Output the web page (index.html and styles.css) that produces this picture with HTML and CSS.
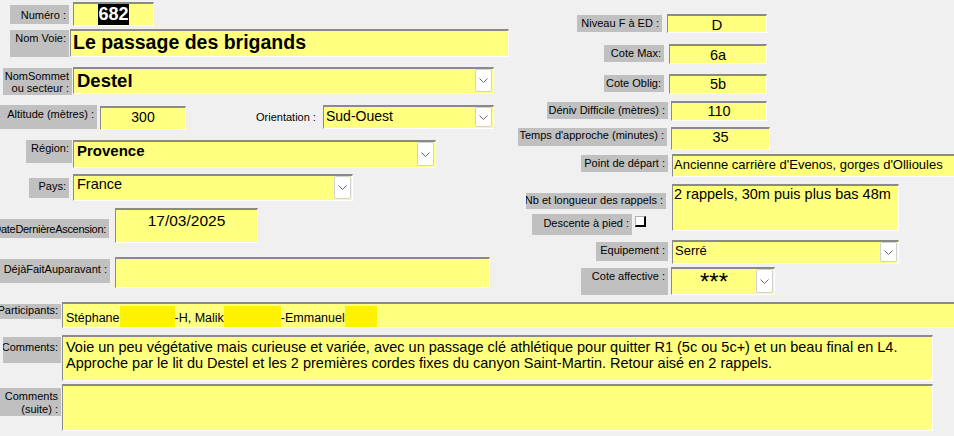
FILE: index.html
```html
<!DOCTYPE html>
<html lang="fr">
  <head>
    <meta charset="UTF-8" />
    <title>Fiche voie</title>
    <link rel="stylesheet" href="styles.css">
  </head>
  <body>
    <div class="form">
      <div class="top">
        <div class="col-left">
          <div class="row r-num">
            <div class="lbl"><span>Numéro :</span></div>
            <div class="fld"><span class="sel">682</span></div>
          </div>
          <div class="row r-voie">
            <div class="lbl"><span>Nom Voie:</span></div>
            <div class="fld">Le passage des brigands</div>
          </div>
          <div class="row r-sommet">
            <div class="lbl"><span>NomSommet<br />ou secteur :</span></div>
            <div class="fld combo">
              <div class="val">Destel</div>
              <div class="btn"><svg width="9" height="5" viewBox="0 0 9 5"><polyline points="0.5,0.5 4.5,4.5 8.5,0.5" /></svg></div>
            </div>
          </div>
          <div class="row r-alt">
            <div class="lbl"><span>Altitude (mètres) :</span></div>
            <div class="fld alt">300</div>
            <div class="plain">Orientation :</div>
            <div class="fld combo orient">
              <div class="val">Sud-Ouest</div>
              <div class="btn"><svg width="9" height="5" viewBox="0 0 9 5"><polyline points="0.5,0.5 4.5,4.5 8.5,0.5" /></svg></div>
            </div>
          </div>
          <div class="row r-reg">
            <div class="lbl"><span>Région:</span></div>
            <div class="fld combo">
              <div class="val">Provence</div>
              <div class="btn"><svg width="9" height="5" viewBox="0 0 9 5"><polyline points="0.5,0.5 4.5,4.5 8.5,0.5" /></svg></div>
            </div>
          </div>
          <div class="row r-pays">
            <div class="lbl"><span>Pays:</span></div>
            <div class="fld combo">
              <div class="val">France</div>
              <div class="btn"><svg width="9" height="5" viewBox="0 0 9 5"><polyline points="0.5,0.5 4.5,4.5 8.5,0.5" /></svg></div>
            </div>
          </div>
          <div class="row r-date">
            <div class="lbl"><span>DateDernièreAscension:</span></div>
            <div class="fld">17/03/2025</div>
          </div>
          <div class="row r-deja">
            <div class="lbl"><span>DéjàFaitAuparavant :</span></div>
            <div class="fld"></div>
          </div>
        </div>

        <div class="col-right">
          <div class="row r-niv">
            <div class="lbl"><span>Niveau F à ED :</span></div>
            <div class="fld num">D</div>
          </div>
          <div class="row r-max">
            <div class="lbl"><span>Cote Max:</span></div>
            <div class="fld num">6a</div>
          </div>
          <div class="row r-oblig">
            <div class="lbl"><span>Cote Oblig:</span></div>
            <div class="fld num">5b</div>
          </div>
          <div class="row r-deniv">
            <div class="lbl"><span>Déniv Difficile (mètres) :</span></div>
            <div class="fld num">110</div>
          </div>
          <div class="row r-temps">
            <div class="lbl"><span>Temps d'approche (minutes) :</span></div>
            <div class="fld num">35</div>
          </div>
          <div class="row r-point">
            <div class="lbl"><span>Point de départ :</span></div>
            <div class="fld">Ancienne carrière d'Evenos, gorges d'Ollioules</div>
          </div>
          <div class="row r-rap">
            <div class="sub">
              <div class="lbl nb"><span>Nb et longueur des rappels :</span></div>
              <div class="desc">
                <div class="lbl"><span>Descente à pied :</span></div>
                <div class="chk"></div>
              </div>
            </div>
            <div class="fld">2 rappels, 30m puis plus bas 48m</div>
          </div>
          <div class="row r-equip">
            <div class="lbl"><span>Equipement :</span></div>
            <div class="fld combo">
              <div class="val">Serré</div>
              <div class="btn"><svg width="9" height="5" viewBox="0 0 9 5"><polyline points="0.5,0.5 4.5,4.5 8.5,0.5" /></svg></div>
            </div>
          </div>
          <div class="row r-aff">
            <div class="lbl"><span>Cote affective :</span></div>
            <div class="fld combo">
              <div class="val">***</div>
              <div class="btn"><svg width="9" height="5" viewBox="0 0 9 5"><polyline points="0.5,0.5 4.5,4.5 8.5,0.5" /></svg></div>
            </div>
          </div>
        </div>
      </div>

      <div class="row r-part">
        <div class="lbl"><span>Participants:</span></div>
        <div class="fld">Stéphane<span class="mask m1"></span>-H, Malik<span class="mask m2"></span>-Emmanuel<span class="mask m3"></span></div>
      </div>
      <div class="row r-com">
        <div class="lbl"><span>Comments:</span></div>
        <div class="fld">Voie un peu végétative mais curieuse et variée, avec un passage clé athlétique pour quitter R1 (5c ou 5c+) et un beau final en L4.<br />Approche par le lit du Destel et les 2 premières cordes fixes du canyon Saint-Martin. Retour aisé en 2 rappels.</div>
      </div>
      <div class="row r-suite">
        <div class="lbl"><span>Comments<br />(suite) :</span></div>
        <div class="fld"></div>
      </div>
    </div>
  </body>
</html>
```

FILE: styles.css
```css
* {
  box-sizing: border-box;
}
body {
  margin: 0;
  background-color: #f0f0f0;
  font-family: "Liberation Sans", Arial, sans-serif;
  color: #000;
  width: 954px;
  height: 436px;
  overflow: hidden;
}
.form {
  width: 954px;
}
.top {
  display: flex;
  height: 295px;
}
.col-left {
  width: 510px;
  flex: none;
}
.col-right {
  flex: 1;
}
.row {
  display: flex;
  align-items: flex-start;
}

/* labels */
.lbl {
  flex: none;
  display: flex;
  justify-content: flex-end;
  overflow: hidden;
  white-space: nowrap;
  background-color: #c0c0c0;
  font-size: 11px;
  line-height: 13px;
  padding: 2px 3px 0 0;
}
.lbl span {
  text-align: right;
}
.plain {
  flex: none;
  font-size: 11px;
  line-height: 13px;
  white-space: nowrap;
}

/* fields */
.fld {
  flex: none;
  background-color: #ffff80;
  border-style: solid;
  border-width: 2px 1px 1px 1px;
  border-color: #8a8a8a #fff #fff #8a8a8a;
  white-space: nowrap;
  overflow: hidden;
  font-size: 14.5px;
}
.fld.num {
  text-align: center;
}
.combo {
  display: flex;
  align-items: stretch;
}
.combo .val {
  flex: 1;
  overflow: hidden;
}
.btn {
  width: 17px;
  flex: none;
  margin: 0 1px 1px 0;
  background-color: #fff;
  border: 1px solid #d2d2d2;
  border-radius: 2px;
  display: flex;
  align-items: center;
  justify-content: center;
}
.btn svg {
  fill: none;
  stroke: #6a6a6a;
  stroke-width: 1;
}
.chk {
  width: 11px;
  height: 11px;
  margin: 2px 0 0 3px;
  background-color: #fff;
  border-style: solid;
  border-width: 1px 2px 2px 1px;
  border-color: #b0b0b0 #000 #000 #b0b0b0;
}
.mask {
  display: inline-block;
  height: 22px;
  vertical-align: -6px;
  background-color: #fff200;
}
.m1 { width: 55px; }
.m2 { width: 57px; }
.m3 { width: 32px; }

/* left column */
.r-num { margin-top: 2px; }
.r-num .lbl { margin: 3px 0 0 10px; width: 59px; height: 19px; padding-top: 4px; }
.r-num .fld { margin-left: 4px; width: 81px; height: 24px; text-align: center; font-size: 18px; font-weight: bold; }
.sel {
  display: inline-block;
  height: 21px;
  line-height: 21px;
  background-color: #000;
  color: #fff;
}

.r-voie { margin-top: 3px; }
.r-voie .lbl { margin: 1px 0 0 10px; width: 59px; height: 27px; padding-top: 2px; }
.r-voie .fld { margin-left: 1px; width: 439px; height: 28px; padding-left: 2px; font-size: 19.5px; font-weight: bold; }

.r-sommet { margin-top: 10px; }
.r-sommet .lbl { margin: 1px 0 0 3px; width: 69px; height: 27px; padding-top: 2px; line-height: 12px; }
.r-sommet .fld { margin-left: 1px; width: 421px; height: 27px; font-size: 18.5px; font-weight: bold; }
.r-sommet .val { padding: 1px 0 0 3px; }

.r-alt { margin-top: 10px; }
.r-alt .lbl { width: 97px; height: 24px; padding-top: 3px; }
.r-alt .alt { margin: 1px 0 0 3px; width: 86px; height: 24px; text-align: center; font-size: 14px; padding-top: 1px; }
.r-alt .plain { margin: 6px 0 0 70px; width: 67px; }
.orient { width: 171px; height: 24px; font-size: 14px; }
.orient .val { padding: 1px 0 0 2px; }

.r-reg { margin-top: 10px; }
.r-reg .lbl { margin-left: 26px; width: 46px; height: 23px; padding-top: 2px; }
.r-reg .fld { margin-left: 1px; width: 363px; height: 28px; font-size: 15px; font-weight: bold; }
.r-reg .val { padding-left: 3px; }

.r-pays { margin-top: 6px; }
.r-pays .lbl { margin: 4px 0 0 29px; width: 40px; height: 20px; padding-top: 2px; }
.r-pays .fld { margin-left: 4px; width: 280px; height: 27px; }
.r-pays .val { padding-left: 3px; }

.r-date { margin-top: 7px; }
.r-date .lbl { margin-top: 11px; width: 109px; height: 19px; padding-top: 4px; letter-spacing: -0.3px; }
.r-date .fld { margin-left: 6px; width: 143px; height: 35px; text-align: center; font-size: 15.5px; padding-top: 2px; }

.r-deja { margin-top: 14px; }
.r-deja .lbl { margin-top: 2px; width: 110px; height: 24px; padding-top: 4px; }
.r-deja .fld { margin-left: 5px; width: 375px; height: 31px; }

/* right column */
.r-niv { margin-top: 14px; }
.r-niv .lbl { margin: 1px 0 0 67px; width: 85px; height: 17px; }
.r-niv .fld { margin-left: 5px; width: 100px; height: 19px; font-size: 15px; }

.r-max { margin-top: 11px; }
.r-oblig { margin-top: 10px; }
.r-max .lbl,
.r-oblig .lbl { margin: 1px 0 0 94px; width: 60px; height: 17px; }
.r-max .fld,
.r-oblig .fld { margin-left: 5px; width: 98px; height: 20px; }
.r-max .fld { padding-top: 1px; }

.r-deniv { margin-top: 7px; }
.r-deniv .lbl { margin: 1px 0 0 37px; width: 121px; height: 17px; }
.r-deniv .fld { margin-left: 3px; width: 96px; height: 20px; }

.r-temps { margin-top: 6px; }
.r-temps .lbl { margin: 1px 0 0 8px; width: 149px; height: 18px; padding-top: 1px; }
.r-temps .fld { margin-left: 4px; width: 99px; height: 23px; }

.r-point { margin-top: 4px; }
.r-point .lbl { margin: 1px 0 0 71px; width: 87px; height: 17px; }
.r-point .fld { margin-left: 4px; width: 290px; height: 23px; font-size: 13px; padding: 1px 0 0 1px; }

.r-rap { margin-top: 7px; }
.sub {
  flex: none;
  width: 142px;
  margin-left: 16px;
}
.lbl.nb { margin-top: 9px; width: 140px; height: 16px; padding-top: 1px; }
.desc {
  display: flex;
  align-items: flex-start;
  margin-top: 5px;
}
.desc .lbl { margin-left: 6px; width: 100px; height: 21px; padding-top: 3px; }
.r-rap .fld { margin-left: 4px; width: 227px; height: 47px; padding-left: 1px; }

.r-equip { margin-top: 5px; }
.r-equip .lbl { margin: 2px 0 0 86px; width: 72px; height: 19px; }
.r-equip .fld { margin-left: 4px; width: 227px; height: 24px; font-size: 13px; }
.r-equip .val { padding: 1px 0 0 2px; }

.r-aff { margin-top: 3px; }
.r-aff .lbl { margin: 1px 0 0 71px; width: 87px; height: 27px; }
.r-aff .fld { margin-left: 3px; width: 104px; height: 28px; font-size: 24px; line-height: 23px; }
.r-aff .val { text-align: center; padding-top: 1px; }

/* bottom rows */
.r-part { margin-top: 7px; }
.r-part .lbl { margin-top: 2px; width: 61px; height: 15px; padding-top: 0; }
.r-part .fld { margin-left: 1px; width: 900px; height: 26px; font-size: 12.5px; padding: 2px 0 0 3px; }

.r-com { margin-top: 7px; }
.r-com .lbl { margin: 2px 0 0 3px; width: 58px; height: 26px; padding-top: 4px; }
.r-com .fld { margin-left: 1px; width: 871px; height: 46px; font-size: 14.5px; line-height: 16px; padding: 2px 0 0 3px; }

.r-suite { margin-top: 3px; }
.r-suite .lbl { margin-top: 4px; width: 61px; height: 28px; padding-top: 2px; }
.r-suite .fld { margin-left: 1px; width: 871px; height: 47px; }
```
